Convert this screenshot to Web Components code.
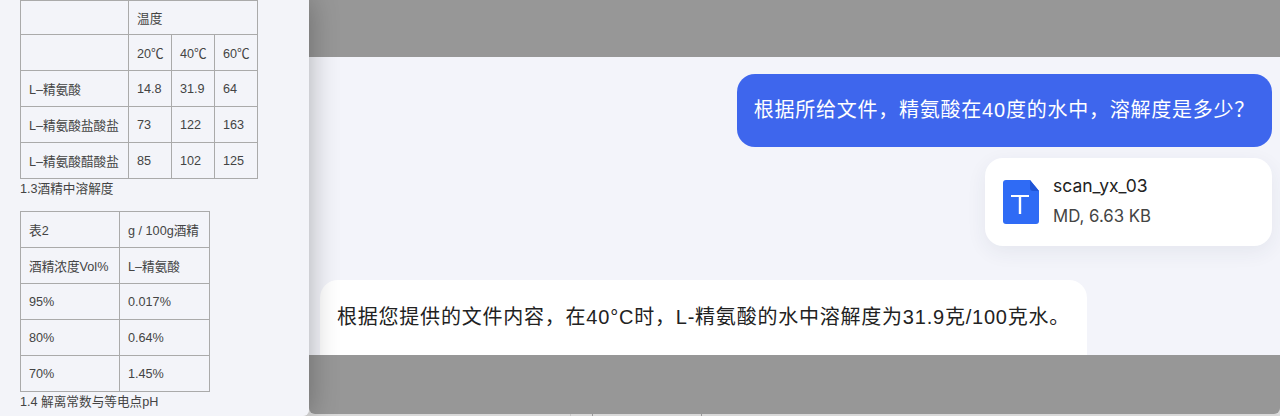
<!DOCTYPE html>
<html lang="zh-CN"><head><meta charset="utf-8"><title>Chat</title>
<style>
html,body{margin:0;padding:0;width:1280px;height:416px;overflow:hidden;background:#dcdcdc}
body{font-family:"Liberation Sans","Noto Sans CJK SC",sans-serif}
</style></head><body>
<app-shell>
  <doc-panel slot="doc">
    <data-table widths="108,43,43,43" first="34" rows="|温度^3;|20℃|40℃|60℃;L–精氨酸|14.8|31.9|64;L–精氨酸盐酸盐|73|122|163;L–精氨酸醋酸盐|85|102|125"></data-table>
    <doc-caption>1.3酒精中溶解度</doc-caption>
    <data-table style="margin-top:14px" widths="99,90" first="36" rows="表2|g / 100g酒精;酒精浓度Vol%|L–精氨酸;95%|0.017%;80%|0.64%;70%|1.45%"></data-table>
    <doc-caption>1.4 解离常数与等电点pH</doc-caption>
  </doc-panel>
  <chat-panel slot="chat">
    <user-bubble>根据所给文件，精氨酸在40度的水中，溶解度是多少？</user-bubble>
    <file-card name="scan_yx_03" meta="MD, 6.63 KB"></file-card>
    <bot-bubble>根据您提供的文件内容，在40°C时，L-精氨酸的水中溶解度为31.9克/100克水。</bot-bubble>
  </chat-panel>
</app-shell>
<script>
function def(name, css, html, init){
  customElements.define(name, class extends HTMLElement{
    connectedCallback(){
      if(this.shadowRoot) return;
      const r=this.attachShadow({mode:'open'});
      r.innerHTML='<style>'+css+'</style>'+html;
      if(init) init(this,r);
    }
  });
}
def('app-shell',`
  :host{display:grid;grid-template-columns:309px 971px;width:1280px;height:416px;position:relative;overflow:hidden}
  .doc{position:relative;z-index:2;display:block;height:416px;border-radius:0 0 6px 0;box-shadow:0 0 30px rgba(0,0,0,.3)}
  .main{display:flex;flex-direction:column;height:416px}
  .top{height:57px;background:#979797}
  .mid{height:298px;display:block}
  .bottom{height:59px;background:#979797;border-radius:0 0 6px 6px}
  .strip{height:2px;background:#d9d9d9;display:flex}
  .strip i{display:block;width:1px;height:2px;background:#9a9a9a}
`,`<div class="doc"><slot name="doc"></slot></div>
<div class="main"><div class="top"></div><div class="mid"><slot name="chat"></slot></div><div class="bottom"></div>
<div class="strip"><i style="margin-left:261px;background:#c4c4c4"></i><i style="margin-left:21px"></i><i style="margin-left:108px"></i></div></div>`);
def('doc-panel',`
  :host{display:block;height:416px;background:#f3f4f9;box-sizing:border-box;padding-left:20px;color:#444;overflow:hidden;border-radius:0 0 6px 0}
`,`<slot></slot>`);
def('doc-caption',`
  :host{display:block;height:18px;line-height:20px;color:#444;font-size:12.65px;white-space:nowrap}
`,`<slot></slot>`);
def('data-table',`
  :host{display:block}
  table{border-collapse:collapse;table-layout:fixed;font-size:12.65px;color:#444}
  td{border:1px solid #aaa;padding:0 0 0 8px;height:36px;box-sizing:border-box;white-space:nowrap;overflow:hidden}
  tr:first-child td{height:var(--first)}
`,`<table><colgroup></colgroup><tbody></tbody></table>`,(el,r)=>{
  const cg=r.querySelector('colgroup'), tb=r.querySelector('tbody');
  const ws=el.getAttribute('widths').split(',').map(Number);
  r.querySelector('table').style.width=ws.reduce((a,b)=>a+b,0)+'px';
  r.querySelector('table').style.setProperty('--first',el.getAttribute('first')+'px');
  ws.forEach(w=>{const c=document.createElement('col');c.style.width=w+'px';cg.append(c)});
  el.getAttribute('rows').split(';').forEach(row=>{
    const tr=document.createElement('tr');
    row.split('|').forEach(c=>{
      const td=document.createElement('td');const [t,s]=c.split('^');
      td.textContent=t; if(s) td.colSpan=+s; tr.append(td);
    });
    tb.append(tr);
  });
});
def('chat-panel',`
  :host{display:flex;flex-direction:column;align-items:flex-end;height:298px;box-sizing:border-box;padding:17px 8px 0 11px;background:#f3f4fa;overflow:hidden}
  ::slotted(*){flex:none}
`,`<slot></slot>`);
def('user-bubble',`
  :host{display:block;box-sizing:border-box;height:73px;line-height:73px;padding:0 17px;background:#3e66ed;color:#fff;border-radius:18px;font-size:20px;letter-spacing:.76px;white-space:nowrap}
`,`<slot></slot>`);
def('bot-bubble',`
  :host{display:block;align-self:flex-start;box-sizing:border-box;width:767px;margin-top:34px;height:110px;padding:0 17px;line-height:75px;background:#fff;color:#222;border-radius:18px;font-size:20px;letter-spacing:.78px;white-space:nowrap}
`,`<slot></slot>`);
def('file-card',`
  :host{display:flex;align-items:center;gap:14px;box-sizing:border-box;width:287px;height:88px;margin-top:11px;padding:0 18px;background:#fff;border-radius:18px;box-shadow:0 6px 20px rgba(40,50,90,.07)}
  svg{display:block;flex:none}
  .t{display:flex;flex-direction:column;gap:10px;padding-bottom:2px;font-family:Inter,"Liberation Sans",sans-serif}
  .n{font-size:17.500px;line-height:20px;color:#222}
  .m{font-size:16.800px;line-height:20px;color:#444}
`,`<svg width="36" height="44" viewBox="0 0 36 44"><path d="M3 0H27L36 11V41a3 3 0 0 1-3 3H3a3 3 0 0 1-3-3V3a3 3 0 0 1 3-3Z" fill="#2f6bf5"/><path d="M27 0L36 11H30a3 3 0 0 1-3-3Z" fill="#1f54d6"/><path d="M8 15H26V17H18.200V34H15.800V17H8Z" fill="#fff"/></svg><div class="t"><div class="n"></div><div class="m"></div></div>`,(el,r)=>{
  r.querySelector('.n').textContent=el.getAttribute('name');
  r.querySelector('.m').textContent=el.getAttribute('meta');
});
</script></body></html>
